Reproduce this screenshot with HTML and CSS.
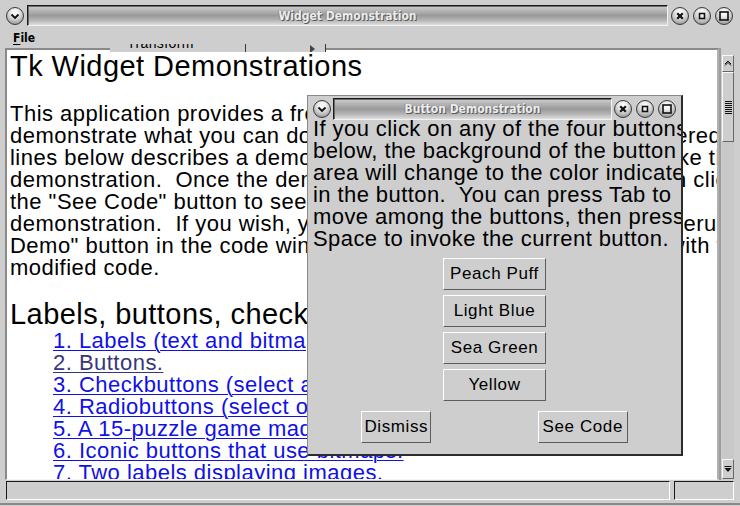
FILE: index.html
```html
<!DOCTYPE html>
<html>
<head>
<meta charset="utf-8">
<title>Widget Demonstration</title>
<link rel="stylesheet" href="styles.css">
</head>
<body>
<div class="win">
  <div class="titlebar">
    <span class="knob"><svg viewBox="0 0 16 16"><path d="M4.5 6.5 L8 10 L11.5 6.5"/></svg></span>
    <div class="tbar main-tbar"><span class="ttext">Widget Demonstration</span></div>
    <span class="knob k1"><svg viewBox="0 0 16 16"><path d="M5.2 5.2 L10.8 10.8 M10.8 5.2 L5.2 10.8" class="x"/></svg></span>
    <span class="knob k2"><svg viewBox="0 0 16 16"><rect x="5.5" y="5.5" width="5" height="5"/></svg></span>
    <span class="knob k2"><svg viewBox="0 0 16 16"><rect x="4" y="4" width="8" height="8"/></svg></span>
  </div>
  <div class="menubar"><span class="menu"><span class="ul">F</span>ile</span></div>
  <div class="main">
    <div class="text">
      <div class="h1">Tk Widget Demonstrations</div>
      <div class="para">
        <div class="ln">This application provides a front end for several short scripts that</div>
        <div class="ln">demonstrate what you can do with Tk widgets.  Each of the numbered</div>
        <div class="ln">lines below describes a demonstration;  you can click on it to invoke the</div>
        <div class="ln">demonstration.  Once the demonstration window appears, you can click</div>
        <div class="ln">the "See Code" button to see the Tcl/Tk code that created the</div>
        <div class="ln">demonstration.  If you wish, you can edit the code and click the "Rerun</div>
        <div class="ln">Demo" button in the code window to reinvoke the demonstration with the</div>
        <div class="ln">modified code.</div>
      </div>
      <div class="h2">Labels, buttons, checkbuttons, and radiobuttons</div>
      <div class="links">
        <div class="ln"><span class="link">1. Labels (text and bitmaps).</span></div>
        <div class="ln"><span class="link visited">2. Buttons.</span></div>
        <div class="ln"><span class="link">3. Checkbuttons (select any of a group).</span></div>
        <div class="ln"><span class="link">4. Radiobuttons (select one of a group).</span></div>
        <div class="ln"><span class="link">5. A 15-puzzle game made out of buttons.</span></div>
        <div class="ln"><span class="link">6. Iconic buttons that use bitmaps.</span></div>
        <div class="ln"><span class="link">7. Two labels displaying images.</span></div>
      </div>
    </div>
    <div class="sb">
      <div class="sbtn up"><svg viewBox="0 0 10 15"><path d="M2 8 L5 5 L8 8 M2 9.5 L5 6.5 L8 9.5"/></svg></div>
      <div class="thumb"><div class="grip"></div></div>
      <div class="trough"></div>
      <div class="sbtn down"><svg viewBox="0 0 10 18"><rect x="1.5" y="6" width="7" height="1"/><polygon points="1.5,8 8.5,8 5,12"/></svg></div>
    </div>
  </div>
  <div class="status"><div class="field f1"></div><div class="field f2"></div></div>
</div>

<div class="ghost">
  <span class="gtext">Transform</span>
  <span class="gline l1"></span>
  <span class="garrow"></span>
  <span class="gline l2"></span>
</div>

<div class="dialog">
  <div class="dtitle">
    <span class="knob"><svg viewBox="0 0 16 16"><path d="M4.5 6.5 L8 10 L11.5 6.5"/></svg></span>
    <div class="tbar dbar"><span class="ttext">Button Demonstration</span></div>
    <span class="knob k1"><svg viewBox="0 0 16 16"><path d="M5.2 5.2 L10.8 10.8 M10.8 5.2 L5.2 10.8" class="x"/></svg></span>
    <span class="knob k2"><svg viewBox="0 0 16 16"><rect x="5.5" y="5.5" width="5" height="5"/></svg></span>
    <span class="knob k2"><svg viewBox="0 0 16 16"><rect x="4" y="4" width="8" height="8"/></svg></span>
  </div>
  <div class="msg">
    <div class="ln">If you click on any of the four buttons</div>
    <div class="ln">below, the background of the button</div>
    <div class="ln">area will change to the color indicated</div>
    <div class="ln">in the button.  You can press Tab to</div>
    <div class="ln">move among the buttons, then press</div>
    <div class="ln">Space to invoke the current button.</div>
  </div>
  <div class="colors">
    <div class="btn cbtn">Peach Puff</div>
    <div class="btn cbtn">Light Blue</div>
    <div class="btn cbtn">Sea Green</div>
    <div class="btn cbtn">Yellow</div>
  </div>
  <div class="actions">
    <div class="btn dismiss">Dismiss</div>
    <div class="btn seecode">See Code</div>
  </div>
</div>
</body>
</html>
```
FILE: styles.css
```css
* { box-sizing: border-box; }
html, body { margin: 0; padding: 0; }
body {
  width: 740px;
  height: 506px;
  overflow: hidden;
  background: #cecece;
  position: relative;
  font-family: "Liberation Sans", Arial, sans-serif;
  color: #000;
}

.win {
  display: flex;
  flex-direction: column;
  height: 505px;
  border-bottom: 2px solid #8a8a8a;
}

/* title bars */
.titlebar {
  display: flex;
  align-items: center;
  height: 28px;
  padding: 3px 7px 0 6px;
  flex: none;
}
.knob {
  width: 18px;
  height: 18px;
  flex: none;
  border-radius: 50%;
  border: 1px solid #3a3a3a;
  background: radial-gradient(circle at 50% 30%, #ffffff 0%, #f4f4f4 22%, #c8c8c8 55%, #9c9c9c 80%, #d8d8d8 100%);
  display: block;
}
.knob svg {
  display: block;
  width: 16px;
  height: 16px;
}
.knob svg path {
  fill: none;
  stroke: #111;
  stroke-width: 1.9;
}
.knob svg path.x { stroke-width: 2.2; }
.knob svg rect {
  fill: none;
  stroke: #111;
  stroke-width: 1.6;
}
.titlebar .k1 { margin-left: 3px; }
.titlebar .k2 { margin-left: 4px; }

.tbar {
  height: 21px;
  display: flex;
  align-items: center;
  justify-content: center;
  border-top: 1px solid #1a1a1a;
  border-left: 1px solid #1a1a1a;
  border-bottom: 1px solid #f2f2f2;
  border-right: 1px solid #f2f2f2;
  box-shadow: inset 1px 1px 0 #6a6a6a;
  background: linear-gradient(#cfcfcf 0%, #b4b4b4 25%, #9a9a9a 50%, #b0b0b0 72%, #dedede 100%);
}
.main-tbar {
  width: 641px;
  margin-left: 3px;
}
.ttext {
  font-family: "DejaVu Sans Condensed", "DejaVu Sans", sans-serif;
  font-weight: bold;
  font-size: 12px;
  color: #ececec;
  text-shadow: 1px 1px 0 #5a5a5a, -1px 0 0 #8c8c8c;
  white-space: nowrap;
}

/* menu */
.menubar {
  height: 18px;
  flex: none;
  padding-left: 13px;
  padding-top: 1px;
  display: flex;
  align-items: center;
}
.menu {
  font-family: "DejaVu Sans Condensed", "DejaVu Sans", sans-serif;
  font-weight: bold;
  font-size: 12px;
  line-height: 18px;
}
.ul { text-decoration: underline; text-underline-offset: 2px; }

/* main area */
.main {
  height: 434px;
  flex: none;
  display: flex;
  padding: 2px 3px 0 5px;
}
.text {
  width: 714px;
  height: 432px;
  background: #fff;
  border-top: 2px solid #8a8a8a;
  border-left: 2px solid #8a8a8a;
  border-right: 2px solid #b0b0b0;
  border-bottom: 1px solid #f6f6f6;
  overflow: hidden;
  padding-left: 3px;
}
.h1, .h2 {
  font-size: 29px;
  line-height: 32px;
  letter-spacing: 0.45px;
  white-space: pre;
}
.para {
  margin-top: 21px;
}
.ln {
  font-size: 22px;
  line-height: 22px;
  letter-spacing: 0.48px;
  white-space: pre;
}
.h2 { margin-top: 19px; }
.links { padding-left: 43px; }
.link {
  color: #1010e8;
  text-decoration: underline;
  text-decoration-thickness: 1px;
  text-underline-offset: 2px;
}
.link.visited { color: #36367e; }

/* scrollbar */
.sb {
  width: 18px;
  height: 432px;
  display: flex;
  flex-direction: column;
  padding: 7px 3px 1px 1px;
  border-left: 2px solid #9c9c9c;
}
.sbtn, .thumb {
  width: 12px;
  border-top: 1px solid #f8f8f8;
  border-left: 1px solid #f8f8f8;
  border-bottom: 1px solid #666;
  border-right: 1px solid #666;
  background: #cecece;
  flex: none;
}
.sbtn svg { display: block; width: 10px; }
.up { height: 17px; }
.up svg { height: 15px; }
.up svg path { fill: none; stroke: #111; stroke-width: 1; }
.down { height: 20px; }
.down svg { height: 18px; }
.down svg rect, .down svg polygon { fill: #111; }
.thumb {
  height: 70px;
  display: flex;
  align-items: center;
  justify-content: center;
}
.grip {
  width: 7px;
  height: 13px;
  background: repeating-linear-gradient(#111 0 1px, transparent 1px 2px);
}
.trough {
  flex: 1;
  background: #c8c8c8;
}

/* status */
.status {
  height: 21px;
  flex: none;
  display: flex;
  padding: 1px 0 0 6px;
  gap: 4px;
}
.field {
  height: 19px;
  border-top: 1px solid #1a1a1a;
  border-left: 1px solid #1a1a1a;
  border-bottom: 1px solid #fff;
  border-right: 1px solid #fff;
}
.f1 { width: 664px; }
.f2 { width: 60px; }

/* ghost remnant at top */
.ghost {
  position: absolute;
  left: 110px;
  top: 44px;
  width: 216px;
  height: 8px;
  background: #cecece;
  overflow: hidden;
}
.gtext {
  position: absolute;
  left: 17px;
  top: -8px;
  font-size: 14px;
  line-height: 14px;
  letter-spacing: 0.4px;
}
.gline {
  position: absolute;
  top: 0;
  width: 1px;
  height: 8px;
  background: #333;
}
.gline.l1 { left: 135px; }
.gline.l2 { left: 215px; }
.garrow {
  position: absolute;
  left: 200px;
  top: 1px;
  width: 0;
  height: 0;
  border-left: 5px solid #444;
  border-top: 4px solid transparent;
  border-bottom: 4px solid transparent;
}

/* dialog */
.dialog {
  position: absolute;
  left: 307px;
  top: 95px;
  width: 376px;
  height: 361px;
  background: #cecece;
  border-left: 1px solid #8a8a8a;
  border-top: 1px solid #8a8a8a;
  border-right: 2px solid #2c2c2c;
  border-bottom: 2px solid #2c2c2c;
  overflow: hidden;
  display: flex;
  flex-direction: column;
}
.dtitle {
  display: flex;
  align-items: center;
  height: 22px;
  margin-top: 2px;
  padding-left: 5px;
  flex: none;
}
.dbar {
  width: 279px;
  height: 22px;
  margin-left: 2px;
}
.dtitle .k1 { margin-left: 2px; }
.dtitle .k2 { margin-left: 4px; }
.msg {
  margin-top: -2px;
  padding-left: 5px;
  flex: none;
}
.msg .ln { letter-spacing: 0.42px; }
.colors {
  display: flex;
  flex-direction: column;
  align-items: center;
  gap: 5px;
  margin-top: 8px;
  flex: none;
}
.btn {
  height: 32px;
  display: flex;
  align-items: center;
  justify-content: center;
  font-size: 17px;
  letter-spacing: 0.6px;
  border-top: 1px solid #fff;
  border-left: 1px solid #fff;
  border-bottom: 1px solid #5c5c5c;
  border-right: 1px solid #5c5c5c;
  background: #cecece;
  white-space: nowrap;
}
.cbtn { width: 103px; }
.actions {
  display: flex;
  justify-content: space-around;
  margin-top: 10px;
  flex: none;
}
.dismiss { width: 70px; }
.seecode { width: 90px; }
```
